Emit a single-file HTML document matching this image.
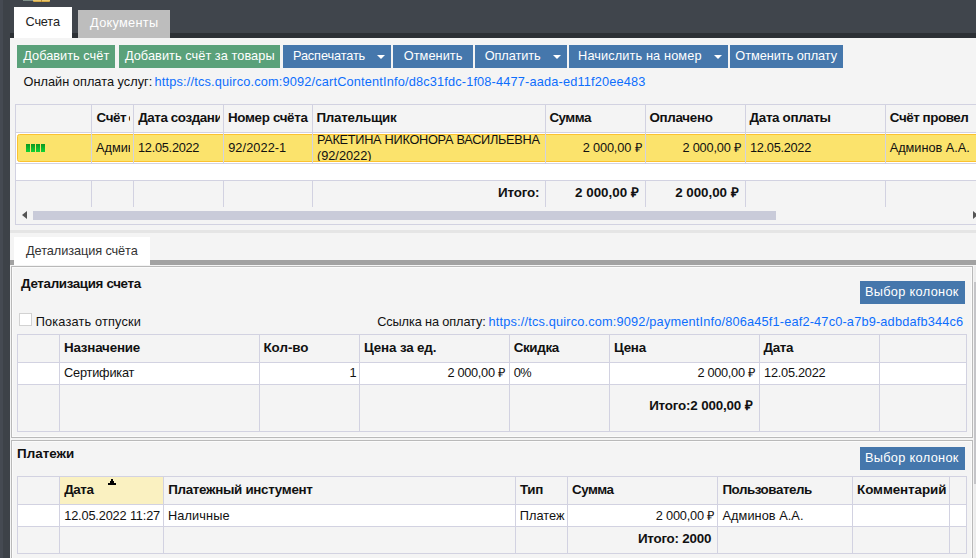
<!DOCTYPE html>
<html lang="ru">
<head>
<meta charset="utf-8">
<title>Счета</title>
<style>
html,body{margin:0;padding:0;}
body{width:976px;height:558px;overflow:hidden;position:relative;background:#40454c;
  font-family:"Liberation Sans",sans-serif;font-size:12.75px;line-height:16px;color:#111;}
.a{position:absolute;box-sizing:border-box;}
.t{position:absolute;white-space:nowrap;line-height:16px;height:16px;}
.b{font-weight:bold;font-size:13.4px;}
.btn{position:absolute;top:45px;height:23px;background:#4577ac;}
.btn.g{background:#5aa17a;}
.link{color:#0d6efd;}
.vl{position:absolute;width:1px;background:#d2d2e1;}
.hl{position:absolute;height:1px;background:#d2d2e1;}
.arr{position:absolute;top:55px;width:0;height:0;border-left:4px solid transparent;border-right:4px solid transparent;border-top:4px solid #fff;}
</style>
</head>
<body>
<!-- left strip lighter part + top area -->
<div class="a" style="left:0;top:0;width:976px;height:34px;background:#40454c"></div>
<div class="a" style="left:0;top:0;width:3px;height:558px;background:#454a52"></div>
<div class="a" style="left:3px;top:0;width:7px;height:558px;background:#3d4248"></div>
<!-- top icon fragments -->
<div class="a" style="left:23px;top:0;width:10px;height:1px;background:#7f9088"></div>
<div class="a" style="left:33px;top:0;width:17px;height:2px;background:linear-gradient(180deg,#f3d684,#c9982f);border-radius:0 0 1px 1px"></div>
<div class="a" style="left:41px;top:0;width:1px;height:2px;background:#b48a30"></div>

<!-- dark band under tabs -->
<div class="a" style="left:10px;top:33px;width:966px;height:5px;background:#2c3035"></div>
<!-- main light area -->
<div class="a" style="left:10px;top:38px;width:966px;height:520px;background:#f4f4f4"></div>

<!-- tabs -->
<div class="a" style="left:14px;top:7px;width:58px;height:31px;background:#fff"></div>
<div class="a" style="left:78px;top:10px;width:92px;height:28px;background:#bdbdbd"></div>

<!-- toolbar buttons -->
<div class="btn g" style="left:17px;width:98px"></div>
<div class="btn g" style="left:119px;width:161px"></div>
<div class="btn" style="left:283px;width:108px"></div><i class="arr" style="left:377px"></i>
<div class="btn" style="left:393px;width:80px"></div>
<div class="btn" style="left:475px;width:92px"></div><i class="arr" style="left:553px"></i>
<div class="btn" style="left:569px;width:159px"></div><i class="arr" style="left:714px"></i>
<div class="btn" style="left:730px;width:113px"></div>

<!-- ===== table 1 ===== -->
<div class="a" style="left:15px;top:104px;width:970px;height:121px;border:1px solid #d2d2e1;background:#f4f4f4"></div>
<div class="hl" style="left:16px;top:132px;width:960px"></div>
<div class="a" style="left:16px;top:133px;width:960px;height:47px;background:#fff"></div>
<div class="hl" style="left:16px;top:163px;width:960px"></div>
<div class="hl" style="left:16px;top:180px;width:960px"></div>
<!-- selected row -->
<div class="a" style="left:17px;top:134px;width:965px;height:28px;background:#fbe36c;border:1px solid #fbc230;border-radius:2.5px"></div>
<!-- column lines header+row -->
<div class="vl" style="left:91px;top:105px;height:58px"></div>
<div class="vl" style="left:133px;top:105px;height:58px"></div>
<div class="vl" style="left:223px;top:105px;height:58px"></div>
<div class="vl" style="left:312px;top:105px;height:58px"></div>
<div class="vl" style="left:545px;top:105px;height:58px"></div>
<div class="vl" style="left:645px;top:105px;height:58px"></div>
<div class="vl" style="left:745px;top:105px;height:58px"></div>
<div class="vl" style="left:885px;top:105px;height:58px"></div>
<!-- column lines footer -->
<div class="vl" style="left:91px;top:181px;height:26px"></div>
<div class="vl" style="left:133px;top:181px;height:26px"></div>
<div class="vl" style="left:223px;top:181px;height:26px"></div>
<div class="vl" style="left:312px;top:181px;height:26px"></div>
<div class="vl" style="left:545px;top:181px;height:26px"></div>
<div class="vl" style="left:645px;top:181px;height:26px"></div>
<div class="vl" style="left:745px;top:181px;height:26px"></div>
<div class="vl" style="left:885px;top:181px;height:26px"></div>
<!-- clipped header/row text -->
<div class="a" style="left:92px;top:105px;width:38px;height:27px;overflow:hidden"><span class="t b" style="left:4.6px;top:5px;letter-spacing:-0.4px;word-spacing:-1.2px">Счёт оплатил</span></div>
<div class="a" style="left:134px;top:105px;width:86px;height:27px;overflow:hidden"><span class="t b" style="left:4.2px;top:5px;letter-spacing:-0.42px">Дата создания</span></div>
<div class="a" style="left:92px;top:135px;width:37.5px;height:27px;overflow:hidden"><span class="t" style="left:4px;top:5px;letter-spacing:0px">Админов А.А.</span></div>
<!-- status bars -->
<div class="a" style="left:26px;top:144px;width:4px;height:8px;background:linear-gradient(180deg,#0c9620,#12d434)"></div>
<div class="a" style="left:31px;top:144px;width:4px;height:8px;background:linear-gradient(180deg,#0c9620,#12d434)"></div>
<div class="a" style="left:36px;top:144px;width:4px;height:8px;background:linear-gradient(180deg,#0c9620,#12d434)"></div>
<div class="a" style="left:41px;top:144px;width:4px;height:8px;background:linear-gradient(180deg,#0c9620,#12d434)"></div>
<!-- scrollbar -->
<div class="a" style="left:22px;top:211px;width:0;height:0;border-top:4.5px solid transparent;border-bottom:4.5px solid transparent;border-right:5px solid #555"></div>
<div class="a" style="left:33px;top:211px;width:743px;height:9px;background:#c9cbd9"></div>
<div class="a" style="left:973px;top:211px;width:0;height:0;border-top:4.5px solid transparent;border-bottom:4.5px solid transparent;border-left:5px solid #555"></div>

<!-- splitter -->
<div class="a" style="left:10px;top:230px;width:966px;height:3px;background:#e5e5e5"></div>

<!-- detail tab -->
<div class="a" style="left:10px;top:260px;width:966px;height:5px;background:#a2a2a2"></div>
<div class="a" style="left:14px;top:237px;width:136px;height:28px;background:#fff"></div>

<!-- panel 1 -->
<div class="a" style="left:11px;top:266px;width:962px;height:172px;border:1px solid #b9b9b9;background:#f4f4f4;box-shadow:inset 0 0 0 1px #fbfbfb"></div>
<div class="btn" style="left:860px;top:281px;width:105px"></div>
<div class="a" style="left:19px;top:313px;width:13px;height:13px;background:#fff;border:1px solid #d2d2d2"></div>

<!-- table 2 -->
<div class="a" style="left:17px;top:334px;width:950px;height:98px;border:1px solid #d2d2e1;background:#f4f4f4"></div>
<div class="a" style="left:18px;top:363px;width:948px;height:21px;background:#fff"></div>
<div class="hl" style="left:18px;top:362px;width:948px"></div>
<div class="hl" style="left:18px;top:384px;width:948px"></div>
<div class="vl" style="left:59px;top:335px;height:96px"></div>
<div class="vl" style="left:259px;top:335px;height:96px"></div>
<div class="vl" style="left:359px;top:335px;height:96px"></div>
<div class="vl" style="left:509px;top:335px;height:96px"></div>
<div class="vl" style="left:609px;top:335px;height:96px"></div>
<div class="vl" style="left:759px;top:335px;height:96px"></div>
<div class="vl" style="left:879px;top:335px;height:96px"></div>

<!-- panel 2 -->
<div class="a" style="left:11px;top:440px;width:962px;height:130px;border:1px solid #b9b9b9;background:#f4f4f4;box-shadow:inset 0 0 0 1px #fbfbfb"></div>
<div class="btn" style="left:860px;top:447px;width:105px"></div>

<!-- table 3 -->
<div class="a" style="left:17px;top:476px;width:950px;height:78px;border:1px solid #d2d2e1;background:#f4f4f4"></div>
<div class="a" style="left:60px;top:477px;width:103px;height:27px;background:#faf1c1"></div>
<div class="a" style="left:18px;top:505px;width:948px;height:21px;background:#fff"></div>
<div class="hl" style="left:18px;top:504px;width:948px"></div>
<div class="hl" style="left:18px;top:526px;width:948px"></div>
<div class="vl" style="left:59px;top:477px;height:76px"></div>
<div class="vl" style="left:163px;top:477px;height:76px"></div>
<div class="vl" style="left:515px;top:477px;height:76px"></div>
<div class="vl" style="left:567px;top:477px;height:76px"></div>
<div class="vl" style="left:717px;top:477px;height:76px"></div>
<div class="vl" style="left:852px;top:477px;height:76px"></div>
<div class="vl" style="left:949px;top:477px;height:76px"></div>
<!-- sort arrow -->
<div class="a" style="left:111px;top:479px;width:2px;height:2px;background:#000"></div>
<div class="a" style="left:110px;top:481px;width:4px;height:2px;background:#000"></div>
<div class="a" style="left:108px;top:483px;width:8px;height:2px;background:#000"></div>

<!-- right scroll strip -->
<div class="a" style="left:974px;top:266px;width:2px;height:292px;background:#ececec"></div>
<div class="a" style="left:974px;top:282px;width:2px;height:202px;background:#c5c5c8"></div>

<span id="tab1" class="t " style="left:25.49px;top:14.0px;letter-spacing:-0.168px;color:#222">Счета</span>
<span id="tab2" class="t " style="left:90.12px;top:15.0px;letter-spacing:0.276px;color:#fff">Документы</span>
<span id="b1" class="t " style="left:23.21px;top:48.0px;letter-spacing:0.028px;color:#fff">Добавить счёт</span>
<span id="b2" class="t " style="left:124.89px;top:48.0px;letter-spacing:0.054px;color:#fff">Добавить счёт за товары</span>
<span id="b3" class="t " style="left:292.94px;top:48.0px;letter-spacing:-0.126px;color:#fff">Распечатать</span>
<span id="b4" class="t " style="left:403.70px;top:48.0px;letter-spacing:0.068px;color:#fff">Отменить</span>
<span id="b5" class="t " style="left:484.70px;top:48.0px;letter-spacing:-0.079px;color:#fff">Оплатить</span>
<span id="b6" class="t " style="left:578.10px;top:48.0px;letter-spacing:0.113px;color:#fff">Начислить на номер</span>
<span id="b7" class="t " style="left:735.30px;top:48.0px;letter-spacing:-0.039px;color:#fff">Отменить оплату</span>
<span id="l1a" class="t " style="left:23.52px;top:74.0px;letter-spacing:0.021px">Онлайн оплата услуг:</span>
<span id="l1b" class="t link" style="left:154.62px;top:74.0px;letter-spacing:0.168px">https://tcs.quirco.com:9092/cartContentInfo/d8c31fdc-1f08-4477-aada-ed11f20ee483</span>
<span id="h13" class="t b" style="left:227.93px;top:110.0px;letter-spacing:-0.326px">Номер счёта</span>
<span id="h14" class="t b" style="left:316.46px;top:110.0px;letter-spacing:-0.270px">Плательщик</span>
<span id="h15" class="t b" style="left:549.45px;top:110.0px;letter-spacing:-0.515px">Сумма</span>
<span id="h16" class="t b" style="left:649.45px;top:110.0px;letter-spacing:-0.312px">Оплачено</span>
<span id="h17" class="t b" style="left:749.62px;top:110.0px;letter-spacing:-0.348px">Дата оплаты</span>
<span id="h18" class="t b" style="left:889.87px;top:110.0px;letter-spacing:-0.457px">Счёт провел</span>
<span id="r12" class="t " style="left:138.01px;top:140.0px;letter-spacing:-0.261px">12.05.2022</span>
<span id="r13" class="t " style="left:228.21px;top:140.0px;letter-spacing:0.071px">92/2022-1</span>
<span id="r15" class="t " style="left:582.66px;top:140.0px;letter-spacing:-0.141px">2 000,00 ₽</span>
<span id="r16" class="t " style="left:682.46px;top:140.0px;letter-spacing:-0.185px">2 000,00 ₽</span>
<span id="r17" class="t " style="left:749.95px;top:140.0px;letter-spacing:-0.276px">12.05.2022</span>
<span id="r18" class="t " style="left:889.71px;top:140.0px;letter-spacing:-0.025px">Админов А.А.</span>
<span id="p1" class="t " style="left:316.88px;top:132.0px;letter-spacing:-0.287px">РАКЕТИНА НИКОНОРА ВАСИЛЬЕВНА</span>
<span id="p2" class="t " style="left:316.92px;top:148.0px;letter-spacing:0.003px">(92/2022)</span>
<span id="f14" class="t b" style="left:497.93px;top:185.0px;letter-spacing:-0.147px">Итого:</span>
<span id="f15" class="t b" style="left:575.07px;top:185.0px;letter-spacing:-0.014px">2 000,00 ₽</span>
<span id="f16" class="t b" style="left:675.18px;top:185.0px;letter-spacing:-0.038px">2 000,00 ₽</span>
<span id="dt" class="t " style="left:26.06px;top:243.0px;letter-spacing:-0.090px;color:#333">Детализация счёта</span>
<span id="dh" class="t b" style="left:21.08px;top:276.0px;letter-spacing:-0.357px">Детализация счета</span>
<span id="vb1" class="t " style="left:864.88px;top:284.0px;letter-spacing:0.329px;color:#fff">Выбор колонок</span>
<span id="cb" class="t " style="left:35.69px;top:314.0px;letter-spacing:0.174px">Показать отпуски</span>
<span id="l2a" class="t " style="left:377.24px;top:314.0px;letter-spacing:-0.122px">Ссылка на оплату:</span>
<span id="l2b" class="t link" style="left:488.56px;top:314.0px;letter-spacing:0.175px">https://tcs.quirco.com:9092/paymentInfo/806a45f1-eaf2-47c0-a7b9-adbdafb344c6</span>
<span id="h21" class="t b" style="left:63.93px;top:340.0px;letter-spacing:-0.193px">Назначение</span>
<span id="h22" class="t b" style="left:263.46px;top:340.0px;letter-spacing:-0.029px">Кол-во</span>
<span id="h23" class="t b" style="left:364.02px;top:340.0px;letter-spacing:-0.156px">Цена за ед.</span>
<span id="h24" class="t b" style="left:513.73px;top:340.0px;letter-spacing:-0.360px">Скидка</span>
<span id="h25" class="t b" style="left:614.02px;top:340.0px;letter-spacing:-0.287px">Цена</span>
<span id="h26" class="t b" style="left:763.62px;top:340.0px;letter-spacing:-0.373px">Дата</span>
<span id="d21" class="t " style="left:64.04px;top:365.0px;letter-spacing:-0.196px">Сертификат</span>
<span id="d22" class="t " style="left:349.42px;top:365.0px;letter-spacing:0.000px">1</span>
<span id="d23" class="t " style="left:447.39px;top:365.0px;letter-spacing:-0.285px">2 000,00 ₽</span>
<span id="d24" class="t " style="left:513.78px;top:365.0px;letter-spacing:-0.600px">0%</span>
<span id="d25" class="t " style="left:697.39px;top:365.0px;letter-spacing:-0.285px">2 000,00 ₽</span>
<span id="d26" class="t " style="left:764.08px;top:365.0px;letter-spacing:-0.253px">12.05.2022</span>
<span id="f25" class="t b" style="left:649.14px;top:398.0px;letter-spacing:-0.167px">Итого:2 000,00 ₽</span>
<span id="ph" class="t b" style="left:17.11px;top:446.0px;letter-spacing:-0.016px">Платежи</span>
<span id="vb2" class="t " style="left:864.88px;top:450.0px;letter-spacing:0.329px;color:#fff">Выбор колонок</span>
<span id="h31" class="t b" style="left:64.24px;top:482.0px;letter-spacing:-0.445px">Дата</span>
<span id="h32" class="t b" style="left:168.14px;top:482.0px;letter-spacing:-0.310px">Платежный инстумент</span>
<span id="h33" class="t b" style="left:520.04px;top:482.0px;letter-spacing:-0.361px">Тип</span>
<span id="h34" class="t b" style="left:572.04px;top:482.0px;letter-spacing:-0.505px">Сумма</span>
<span id="h35" class="t b" style="left:722.38px;top:482.0px;letter-spacing:-0.462px">Пользователь</span>
<span id="h36" class="t b" style="left:857.11px;top:482.0px;letter-spacing:-0.090px">Комментарий</span>
<span id="d31" class="t " style="left:64.26px;top:508.0px;letter-spacing:-0.157px">12.05.2022 11:27</span>
<span id="d32" class="t " style="left:167.91px;top:508.0px;letter-spacing:0.142px">Наличные</span>
<span id="d33" class="t " style="left:519.78px;top:508.0px;letter-spacing:0.013px">Платеж</span>
<span id="d34" class="t " style="left:655.81px;top:508.0px;letter-spacing:-0.198px">2 000,00 ₽</span>
<span id="d35" class="t " style="left:722.56px;top:508.0px;letter-spacing:0.049px">Админов А.А.</span>
<span id="f34" class="t b" style="left:637.93px;top:531.0px;letter-spacing:-0.229px">Итого: 2000</span>
<div class="a" style="left:313px;top:161px;width:232px;height:1px;background:#fbc230"></div>
<div class="a" style="left:313px;top:162px;width:232px;height:1px;background:#fff"></div>
<div class="a" style="left:313px;top:163px;width:232px;height:1px;background:#d2d2e1"></div>
</body>
</html>
